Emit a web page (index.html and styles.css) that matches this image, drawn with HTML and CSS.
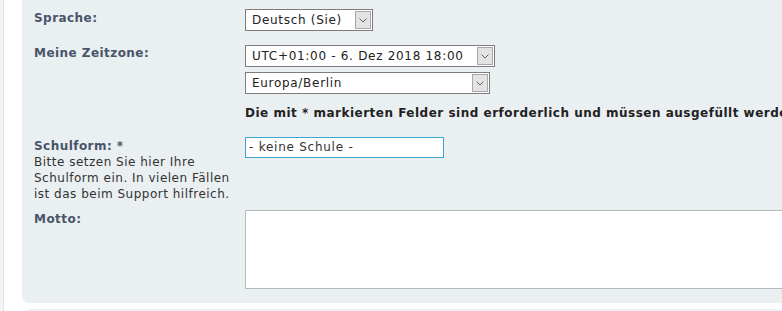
FILE: index.html
```html
<!doctype html>
<html lang="de">

<head>
  <meta charset="UTF-8" />
  <meta name="viewport" content="width=device-width, initial-scale=1.0" />
  <title>Profil bearbeiten</title>
  <link rel="stylesheet" href="styles.css">
</head>

<body>
  <div class="layout">
    <div class="rail"></div>
    <main class="main">
      <section class="panel">
        <div class="form-row row-lang">
          <div class="label">Sprache:</div>
          <div class="field">
            <div class="select select-lang">
              <span class="select-text">Deutsch (Sie)</span>
              <span class="select-arrow">
                <svg width="8" height="5" viewBox="0 0 8 5"><path d="M0.5 0.5 L4 4 L7.5 0.5" fill="none" stroke="#666" stroke-width="1"/></svg>
              </span>
            </div>
          </div>
        </div>

        <div class="form-row row-zone">
          <div class="label">Meine Zeitzone:</div>
          <div class="field stack">
            <div class="select select-offset">
              <span class="select-text">UTC+01:00 - 6. Dez 2018 18:00</span>
              <span class="select-arrow">
                <svg width="8" height="5" viewBox="0 0 8 5"><path d="M0.5 0.5 L4 4 L7.5 0.5" fill="none" stroke="#666" stroke-width="1"/></svg>
              </span>
            </div>
            <div class="select select-city">
              <span class="select-text">Europa/Berlin</span>
              <span class="select-arrow">
                <svg width="8" height="5" viewBox="0 0 8 5"><path d="M0.5 0.5 L4 4 L7.5 0.5" fill="none" stroke="#666" stroke-width="1"/></svg>
              </span>
            </div>
          </div>
        </div>

        <div class="form-row row-note">
          <div class="label"></div>
          <div class="field">
            <p class="required-note">Die mit * markierten Felder sind erforderlich und müssen ausgefüllt werden.</p>
          </div>
        </div>

        <div class="form-row row-school">
          <div class="label">
            Schulform: *
            <span class="hint">Bitte setzen Sie hier Ihre Schulform ein. In vielen Fällen ist das beim Support hilfreich.</span>
          </div>
          <div class="field">
            <div class="text-input">- keine Schule -</div>
          </div>
        </div>

        <div class="form-row row-motto">
          <div class="label">Motto:</div>
          <div class="field">
            <div class="textarea"></div>
          </div>
        </div>
      </section>
      <section class="panel panel-next"></section>
    </main>
  </div>
</body>

</html>
```

FILE: styles.css
```css
html,
body {
  margin: 0;
  padding: 0;
  overflow: hidden;
}

body {
  font-family: "DejaVu Sans", Verdana, sans-serif;
  font-size: 12px;
  line-height: 16px;
  letter-spacing: 0.5px;
  color: #333;
  background-color: #fff;
}

.layout {
  display: flex;
  width: 1000px;
  height: 311px;
}

.rail {
  width: 3px;
  background: #f2f4f8;
  border-right: 1px solid #e2e5ea;
}

.main {
  flex: 1;
  padding-left: 18px;
}

.panel {
  background: #eaeff2;
  padding: 9px 0 14px 12px;
  border-radius: 0 0 0 7px;
}

.panel-next {
  margin: 6px 0 0 2px;
  height: 20px;
  padding: 0;
  background: #eef1f4;
  border-radius: 7px 0 0 0;
}

.form-row {
  display: grid;
  grid-template-columns: 211px 1fr;
}

.label {
  font-weight: bold;
  color: #485468;
  letter-spacing: 0.45px;
}

.hint {
  display: block;
  font-weight: normal;
  color: #333;
  width: 205px;
  letter-spacing: 0.5px;
}

.row-lang .label {
  padding-top: 1px;
}

.row-zone {
  margin-top: 14px;
}

.row-note {
  margin-top: 11px;
}

.row-school {
  margin-top: 16px;
}

.row-school .label {
  padding-top: 1px;
}

.row-motto {
  margin-top: 8px;
}

.row-motto .label {
  padding-top: 1px;
}

.stack {
  display: flex;
  flex-direction: column;
  gap: 5px;
}

.select {
  display: flex;
  align-items: stretch;
  height: 22px;
  box-sizing: border-box;
  border: 1px solid #7d7d7d;
  background: #fff;
  color: #222;
}

.select-text {
  flex: 1;
  padding-left: 6px;
  line-height: 20px;
  letter-spacing: 0.7px;
  white-space: nowrap;
}

.select-arrow {
  width: 14px;
  margin: 1px;
  border: 1px solid #a8a8a8;
  background: #e3e3e3;
  display: flex;
  align-items: center;
  justify-content: center;
}

.select-lang {
  width: 128px;
}

.select-offset {
  width: 250px;
}

.select-city {
  width: 245px;
}

.required-note {
  margin: 0;
  font-weight: bold;
  color: #222;
  white-space: nowrap;
}

.text-input {
  width: 199px;
  height: 21px;
  box-sizing: border-box;
  border: 1px solid #3fa4d4;
  background: #fff;
  color: #333;
  padding-left: 3px;
  line-height: 19px;
  letter-spacing: 0.75px;
}

.textarea {
  width: 600px;
  height: 79px;
  box-sizing: border-box;
  border: 1px solid #b5b9bc;
  background: #fff;
}
```
